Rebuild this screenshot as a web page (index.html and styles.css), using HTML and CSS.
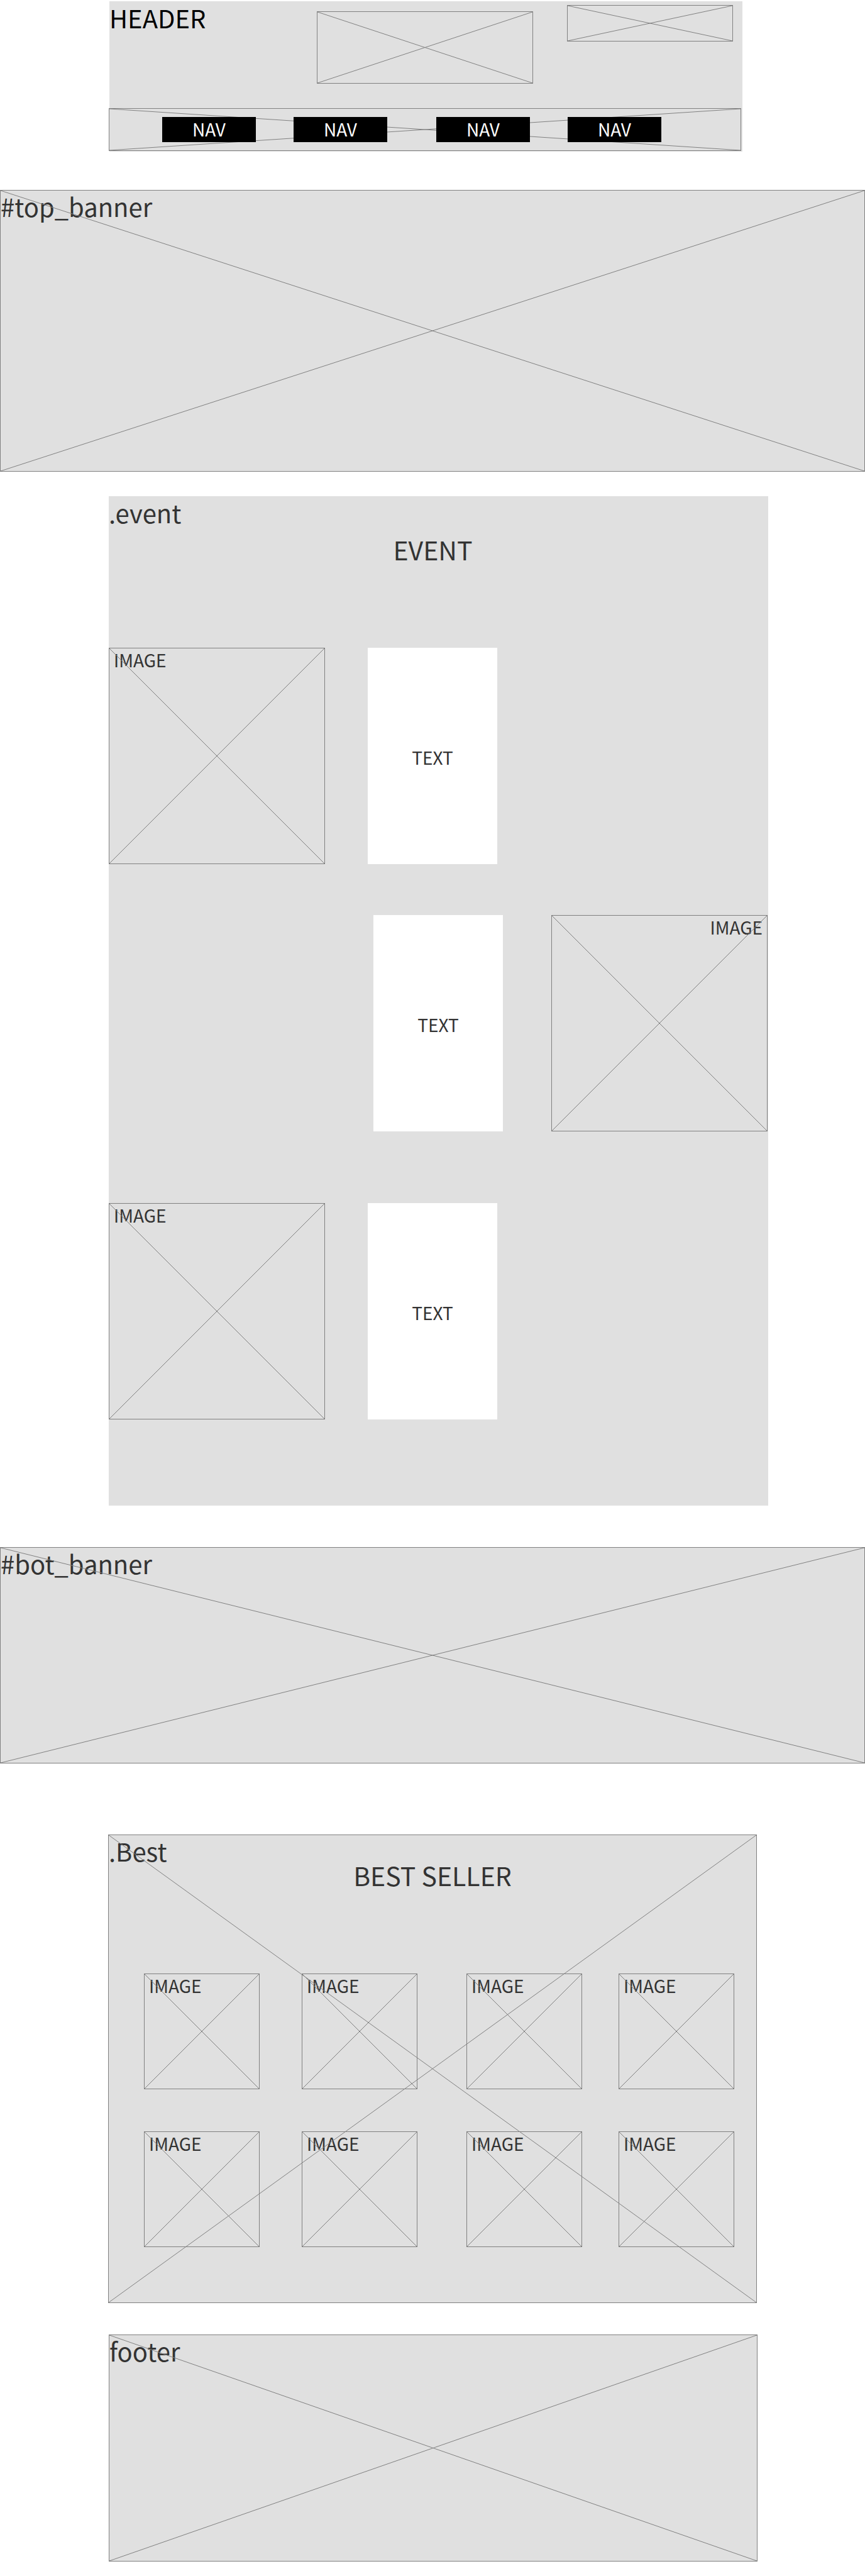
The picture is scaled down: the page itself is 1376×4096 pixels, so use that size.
FILE: index.html
```
<!DOCTYPE html>
<html lang="en">
<head>
  <meta charset="utf-8">
  <meta name="viewport" content="width=device-width, initial-scale=1">
  <title>Wireframe</title>
  <link rel="stylesheet" href="styles.css">
</head>
<body>
  <header class="header">
    <div class="header-top">
      <h1 class="label label-dark">HEADER</h1>
      <div class="frame logo"><svg class="cross" aria-hidden="true"><line x1="0" y1="0" x2="100%" y2="100%"/><line x1="0" y1="100%" x2="100%" y2="0"/></svg></div>
      <div class="frame tools"><svg class="cross" aria-hidden="true"><line x1="0" y1="0" x2="100%" y2="100%"/><line x1="0" y1="100%" x2="100%" y2="0"/></svg></div>
    </div>
    <nav class="frame nav">
      <svg class="cross" aria-hidden="true"><line x1="0" y1="0" x2="100%" y2="100%"/><line x1="0" y1="100%" x2="100%" y2="0"/></svg>
      <div class="nav-group">
        <a class="nav-link" href="#top_banner">NAV</a>
        <a class="nav-link" href="#event">NAV</a>
      </div>
      <div class="nav-group">
        <a class="nav-link" href="#bot_banner">NAV</a>
        <a class="nav-link" href="#best">NAV</a>
      </div>
    </nav>
  </header>

  <main>
    <section class="frame banner banner-top" id="top_banner">
      <h2 class="label">#top_banner</h2>
      <svg class="cross" aria-hidden="true"><line x1="0" y1="0" x2="100%" y2="100%"/><line x1="0" y1="100%" x2="100%" y2="0"/></svg>
    </section>

    <section class="event" id="event">
      <div class="section-head event-head">
        <p class="label">.event</p>
        <h2 class="heading">EVENT</h2>
      </div>
      <div class="event-row">
        <div class="frame image"><span>IMAGE</span><svg class="cross" aria-hidden="true"><line x1="0" y1="0" x2="100%" y2="100%"/><line x1="0" y1="100%" x2="100%" y2="0"/></svg></div>
        <p class="text-box">TEXT</p>
      </div>
      <div class="event-row event-row-end">
        <p class="text-box">TEXT</p>
        <div class="frame image image-end"><span>IMAGE</span><svg class="cross" aria-hidden="true"><line x1="0" y1="0" x2="100%" y2="100%"/><line x1="0" y1="100%" x2="100%" y2="0"/></svg></div>
      </div>
      <div class="event-row">
        <div class="frame image"><span>IMAGE</span><svg class="cross" aria-hidden="true"><line x1="0" y1="0" x2="100%" y2="100%"/><line x1="0" y1="100%" x2="100%" y2="0"/></svg></div>
        <p class="text-box">TEXT</p>
      </div>
    </section>

    <section class="frame banner banner-bottom" id="bot_banner">
      <h2 class="label">#bot_banner</h2>
      <svg class="cross" aria-hidden="true"><line x1="0" y1="0" x2="100%" y2="100%"/><line x1="0" y1="100%" x2="100%" y2="0"/></svg>
    </section>

    <section class="frame best" id="best">
      <div class="section-head best-head">
        <p class="label">.Best</p>
        <h2 class="heading">BEST SELLER</h2>
      </div>
      <div class="best-grid">
        <div class="frame image thumb"><span>IMAGE</span><svg class="cross" aria-hidden="true"><line x1="0" y1="0" x2="100%" y2="100%"/><line x1="0" y1="100%" x2="100%" y2="0"/></svg></div>
        <div class="frame image thumb"><span>IMAGE</span><svg class="cross" aria-hidden="true"><line x1="0" y1="0" x2="100%" y2="100%"/><line x1="0" y1="100%" x2="100%" y2="0"/></svg></div>
        <div class="frame image thumb"><span>IMAGE</span><svg class="cross" aria-hidden="true"><line x1="0" y1="0" x2="100%" y2="100%"/><line x1="0" y1="100%" x2="100%" y2="0"/></svg></div>
        <div class="frame image thumb"><span>IMAGE</span><svg class="cross" aria-hidden="true"><line x1="0" y1="0" x2="100%" y2="100%"/><line x1="0" y1="100%" x2="100%" y2="0"/></svg></div>
        <div class="frame image thumb"><span>IMAGE</span><svg class="cross" aria-hidden="true"><line x1="0" y1="0" x2="100%" y2="100%"/><line x1="0" y1="100%" x2="100%" y2="0"/></svg></div>
        <div class="frame image thumb"><span>IMAGE</span><svg class="cross" aria-hidden="true"><line x1="0" y1="0" x2="100%" y2="100%"/><line x1="0" y1="100%" x2="100%" y2="0"/></svg></div>
        <div class="frame image thumb"><span>IMAGE</span><svg class="cross" aria-hidden="true"><line x1="0" y1="0" x2="100%" y2="100%"/><line x1="0" y1="100%" x2="100%" y2="0"/></svg></div>
        <div class="frame image thumb"><span>IMAGE</span><svg class="cross" aria-hidden="true"><line x1="0" y1="0" x2="100%" y2="100%"/><line x1="0" y1="100%" x2="100%" y2="0"/></svg></div>
      </div>
      <svg class="cross" aria-hidden="true"><line x1="0" y1="0" x2="100%" y2="100%"/><line x1="0" y1="100%" x2="100%" y2="0"/></svg>
    </section>
  </main>

  <footer class="frame footer">
    <p class="label">footer</p>
    <svg class="cross" aria-hidden="true"><line x1="0" y1="0" x2="100%" y2="100%"/><line x1="0" y1="100%" x2="100%" y2="0"/></svg>
  </footer>
</body>
</html>
```
FILE: styles.css
```
* {
  box-sizing: border-box;
}

body {
  display: flow-root;
  margin: 0;
  padding-bottom: 23px;
  background: #fff;
  color: #333;
  font-family: "Noto Sans CJK KR", "Noto Sans", sans-serif;
  font-size: 28px;
  line-height: 36px;
}

h1,
h2,
p {
  margin: 0;
  font-weight: 400;
}

/* Outlined placeholder with two diagonals */
.frame {
  position: relative;
  border: 1px solid #808080;
}

.cross {
  position: absolute;
  inset: 0;
  width: 100%;
  height: 100%;
  pointer-events: none;
  stroke: #808080;
  stroke-width: 1;
}

.label {
  font-size: 40px;
  line-height: 50px;
}

.heading {
  font-size: 41px;
  line-height: 50px;
}

.label-dark {
  color: #000;
}

/* Header */
.header {
  margin: 2px 195px 0 174px;
  padding: 1px 0;
  background: #e0e0e0;
}

.header-top {
  display: flex;
  align-items: flex-start;
  min-height: 169px;
  padding-right: 15px;
}

.header-top .label {
  flex: 1;
}

.logo {
  width: 344px;
  height: 115px;
  margin: 15px 54px 0 0;
}

.tools {
  width: 264px;
  height: 58px;
  margin-top: 5px;
}

.nav {
  display: flex;
  align-items: center;
  gap: 78px;
  height: 68px;
  margin: 0 2px 0 -1px;
  padding-left: 84px;
  background: #e0e0e0;
}

.nav-group {
  position: relative;
  display: flex;
  gap: 60px;
}

.nav-link {
  width: 149px;
  padding: 1px 0 3px;
  background: #000;
  color: #fff;
  text-align: center;
  text-decoration: none;
}

/* Banners */
.banner {
  background: #e0e0e0;
}

.banner-top {
  min-height: 448px;
  margin-top: 61px;
}

.banner-bottom {
  min-height: 344px;
  margin-top: 66px;
}

/* Section tag and centred heading share one cell */
.section-head {
  display: grid;
}

.section-head > * {
  grid-area: 1 / 1;
}

.heading {
  text-align: center;
}

/* Image placeholders */
.image {
  width: 344px;
  aspect-ratio: 1;
  padding: 0 7px;
}

.image span {
  display: block;
}

.image-end {
  text-align: right;
}

/* Event */
.event {
  margin: 39px 154px 0 173px;
  padding: 1px 0 137px;
  background: #e0e0e0;
}

.event-head {
  margin-bottom: 131px;
}

.event-head .heading {
  padding: 58px 18px 1px 0;
}

.event-row {
  display: flex;
  gap: 68px;
}

.event-row-end {
  justify-content: flex-end;
  gap: 77px;
  margin: 81px 0 114px;
  padding-right: 1px;
}

.text-box {
  display: flex;
  align-items: center;
  justify-content: center;
  width: 206px;
  padding-top: 4px;
  background: #fff;
}

/* Best seller */
.best {
  margin: 113px 172px 0;
  padding-bottom: 88px;
  background: #e0e0e0;
}

.best-head {
  margin-bottom: 132px;
}

.best-head .heading {
  padding-top: 38px;
}

.best-grid {
  display: grid;
  grid-template-columns: 251fr 262fr 242fr 184fr;
  row-gap: 67px;
  padding: 0 35px 0 56px;
}

.thumb {
  width: 184px;
}

/* Footer */
.footer {
  min-height: 361px;
  margin: 50px 171px 0 173px;
  background: #e0e0e0;
}
```
